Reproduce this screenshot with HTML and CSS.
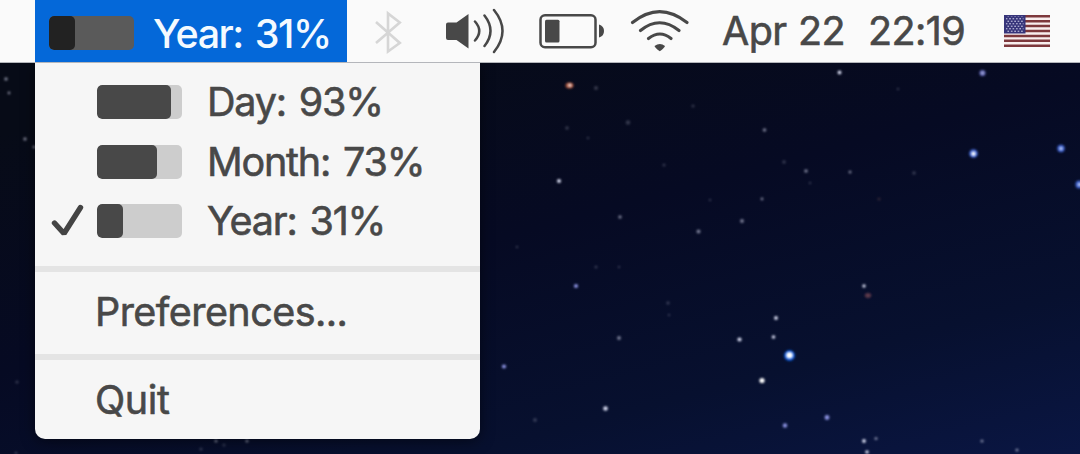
FILE: index.html
```html
<!DOCTYPE html>
<html lang="en">
<head>
<meta charset="utf-8">
<title>Progress menu</title>
<link rel="stylesheet" href="styles.css">
</head>
<body>
<div class="desktop">
  <svg class="sky" viewBox="0 0 1080 454" aria-hidden="true">
    <defs>
      <filter id="soft" x="-100%" y="-100%" width="300%" height="300%"><feGaussianBlur stdDeviation="0.8"/></filter>
    </defs>
    <g fill="#d5d9ee" filter="url(#soft)">
      <g opacity=".22">
        <circle cx="596" cy="88" r="2"/><circle cx="567" cy="128" r="1.8"/><circle cx="628" cy="122.500" r="2.200"/><circle cx="693" cy="106" r="1.500"/><circle cx="664" cy="165" r="1.500"/><circle cx="588" cy="138" r="1.200"/><circle cx="710" cy="200" r="1.200"/><circle cx="517" cy="247" r="1.200"/><circle cx="596" cy="267" r="1.500"/><circle cx="619" cy="267" r="1.200"/><circle cx="668" cy="303" r="1.700"/><circle cx="669" cy="315" r="1.200"/><circle cx="784" cy="162" r="1.800"/><circle cx="810" cy="183" r="1.200"/><circle cx="914" cy="173" r="1.800"/><circle cx="535" cy="420" r="1.900"/><circle cx="898" cy="89" r="1.200"/><circle cx="879" cy="199" r="1.600" fill="#c08068"/><circle cx="17" cy="382" r="1.600"/><circle cx="201" cy="449" r="1.600"/><circle cx="224" cy="445" r="1.500"/><circle cx="16" cy="453" r="1.500"/>
      </g>
      <g opacity=".55">
        <circle cx="6" cy="79" r="1.800"/><circle cx="9" cy="93" r="1.400"/><circle cx="25" cy="139" r="1.700"/><circle cx="34" cy="147" r="1.500"/><circle cx="742" cy="221" r="1.900"/><circle cx="764.500" cy="130" r="1.800"/><circle cx="620" cy="217" r="1.700"/><circle cx="762" cy="199" r="1.400"/><circle cx="850" cy="172" r="1.500"/><circle cx="806" cy="171" r="1.800"/><circle cx="876" cy="438.500" r="1.600"/><circle cx="1017" cy="450" r="1.600"/><circle cx="982" cy="441" r="1.600"/><circle cx="216" cy="441" r="1.600"/><circle cx="247" cy="441" r="1.600"/><circle cx="698.500" cy="231.500" r="2"/><circle cx="619" cy="338" r="1.900"/>
      </g>
      <circle cx="559" cy="181" r="2"/><circle cx="839.500" cy="72.500" r="1.900"/><circle cx="864" cy="286" r="1.700"/><circle cx="776" cy="318" r="1.900"/><circle cx="773.500" cy="337" r="1.800"/><circle cx="739.500" cy="339.500" r="2.100"/><circle cx="605.500" cy="408.500" r="2.300"/><circle cx="864" cy="441" r="1.900"/><circle cx="867" cy="452" r="1.800"/><circle cx="762" cy="380.500" r="2.600" fill="#fff"/>
      <g fill="#8a91e0"><circle cx="576" cy="286" r="2.100"/><circle cx="504" cy="366.500" r="2.100"/><circle cx="785" cy="425.500" r="2.200"/><circle cx="827" cy="417.500" r="2.400"/></g>
      <circle cx="982.500" cy="73" r="3.100" fill="#6268b4"/>
      <g fill="#4265cf"><circle cx="973.500" cy="153.500" r="4.300"/><circle cx="1061" cy="148.500" r="3.700"/><circle cx="1079.500" cy="184.500" r="4"/></g>
      <circle cx="789.500" cy="355.500" r="5.400" fill="#165ad5"/>
      <ellipse cx="569.500" cy="85.500" rx="4" ry="3" fill="#a6553f"/>
      <ellipse cx="868" cy="295.500" rx="3.200" ry="2.400" fill="#5a3848"/>
    </g>
    <g fill="#fff" filter="url(#soft)">
      <circle cx="973.500" cy="153.800" r="2.200"/><circle cx="1061" cy="148.500" r="1.500" opacity=".8"/><circle cx="1079.500" cy="184.500" r="1.600" opacity=".8"/><circle cx="982.500" cy="73" r="1.200" opacity=".6"/><circle cx="789.500" cy="355.300" r="3.300"/><circle cx="569.800" cy="85.300" r="1.800" opacity=".75"/>
    </g>
  </svg>

  <header class="menubar">
    <div class="status-item">
      <span class="meter meter-dark"><span class="meter-fill" style="width:31%"></span></span>
      <span class="status-label">Year: 31%</span>
    </div>
    <svg class="tray" width="350" height="62" viewBox="347 0 350 62" aria-hidden="true">
      <path d="M376 22L399.800 43L388 51.500V13.500L399.800 22.500L376 43" fill="none" stroke="#d6d6d6" stroke-width="2.600"/>
      <g fill="#484848">
        <path d="M448 22.500H456.500L468.500 14V48.500L456.500 40H448Q446 40 446 38V24.500Q446 22.500 448 22.500Z"/>
        <rect x="545" y="19.800" width="14.500" height="22.800" rx="1.500"/>
        <path d="M599 24.500Q604 26 604 31T599 37.500Z"/>
        <path d="M654.500 46Q660 42 665 46Q664.500 48 659.800 51.200Q655 48 654.500 46Z"/>
      </g>
      <g fill="none" stroke="#484848" stroke-linecap="round">
        <g stroke-width="2.500">
          <path d="M475 21.500Q483.500 31 475 40.500M484.500 15.500Q496.500 31 484.500 46M494 10Q511 31 494 52"/>
          <rect x="540.500" y="15.300" width="55" height="31.900" rx="4.500"/>
        </g>
        <g stroke-width="3.100">
          <path d="M632.500 22.500Q659.500 .700 687 22.500M640.500 30.500Q659.500 15 679 30.500M648.500 38.500Q660 29.500 671 38.500"/>
        </g>
      </g>
    </svg>
    <time class="clock">Apr 22&nbsp; 22:19</time>
    <svg class="flag" width="46" height="32" viewBox="0 0 46 32" aria-hidden="true">
      <defs>
        <pattern id="stars" width="3.400" height="5" patternUnits="userSpaceOnUse">
          <circle cx=".9" cy="1.300" r=".75" fill="#dcdcf2"/><circle cx="2.600" cy="3.800" r=".75" fill="#dcdcf2"/>
        </pattern>
      </defs>
      <rect width="46" height="32" fill="#f8eeee"/>
      <path d="M0 1.230H46M0 6.150H46M0 11.070H46M0 16H46M0 20.920H46M0 25.840H46M0 30.760H46" stroke="#7d383c" stroke-width="2.460"/>
      <rect width="21.500" height="18.500" fill="#37357a"/>
      <rect x="2" y="1.500" width="17.500" height="15.500" fill="url(#stars)"/>
    </svg>
  </header>

  <nav class="menu">
    <ul class="group periods">
      <li class="row"><span class="check"></span><span class="meter"><span class="meter-fill" style="width:87%"></span></span><span class="label">Day: 93%</span></li>
      <li class="row"><span class="check"></span><span class="meter"><span class="meter-fill" style="width:70%"></span></span><span class="label">Month: 73%</span></li>
      <li class="row"><span class="check"><svg width="34" height="34" viewBox="0 0 34 34" aria-hidden="true"><path d="M3.500 19L13 29.500L29.500 3.500" fill="none" stroke="#444" stroke-width="5.400" stroke-linecap="round" stroke-linejoin="bevel"/></svg></span><span class="meter"><span class="meter-fill" style="width:31%"></span></span><span class="label">Year: 31%</span></li>
    </ul>
    <div class="group action preferences"><span class="label">Preferences...</span></div>
    <div class="group action quit"><span class="label">Quit</span></div>
  </nav>
</div>
</body>
</html>
```
FILE: styles.css
```css
* { box-sizing: border-box; }

body {
  margin: 0;
  font-family: Inter, "Liberation Sans", sans-serif;
  font-size: 39.5px;
  line-height: 1;
  color: #484848;
  white-space: nowrap;
}

.desktop {
  position: relative;
  width: 1080px;
  height: 454px;
  overflow: hidden;
  background: linear-gradient(165deg, #070b17 18%, #060a23 50%, #07102f 78%, #0a1643 100%);
}

.sky { position: absolute; inset: 0; width: 100%; height: 100%; }

.menubar {
  position: relative;
  z-index: 1;
  display: flex;
  align-items: center;
  height: 63px;
  padding: 0 0 0 35px;
  background: #fafafa;
  border-bottom: 1px solid #b4b6bb;
}

.status-item {
  display: flex;
  align-items: center;
  width: 312px;
  height: 62px;
  padding: 3px 0 0 14px;
  gap: 19px;
  background: #0468d9;
  color: #f4faff;
}

.status-label { padding-top: 5px; font-weight: 500; letter-spacing: -1.5px; word-spacing: 3px; }

.meter {
  display: block;
  flex: none;
  width: 85px;
  height: 34px;
  border-radius: 5px;
  background: #cdcdcd;
  overflow: hidden;
}

.meter-fill { display: block; height: 100%; border-radius: 5px; background: #484848; }
.meter-dark { background: #5a5a5a; }
.meter-dark .meter-fill { background: #222; }

.tray { flex: none; }

.clock {
  width: 282px;
  padding: 2px 0 0 25px;
  letter-spacing: -0.6px;
  word-spacing: 1px;
  -webkit-text-stroke: .6px currentColor;
}

.flag { margin-left: 25px; flex: none; }

.menu {
  position: relative;
  width: 445px;
  height: 376px;
  margin-left: 35px;
  border-radius: 0 0 10px 10px;
  background: #f6f6f6;
  box-shadow: 0 2px 14px rgba(0, 0, 0, .5);
}

.group + .group { border-top: 6px solid #e4e4e4; }

.periods { height: 203px; margin: 0; padding: 9.4px 0 0; list-style: none; }
.row { display: flex; align-items: center; height: 59.5px; }
.check { display: flex; width: 46px; margin-left: 16px; }
.row .meter { margin-right: 25px; }

.label {
  padding-top: 2px;
  letter-spacing: -1.2px;
  word-spacing: 3px;
  -webkit-text-stroke: .6px currentColor;
}

.action { display: flex; align-items: center; padding-left: 60px; }
.preferences { height: 88px; }
.preferences .label { padding-top: 0; letter-spacing: -0.55px; }
.quit { height: 85px; }
.quit .label { letter-spacing: -0.4px; }
```
